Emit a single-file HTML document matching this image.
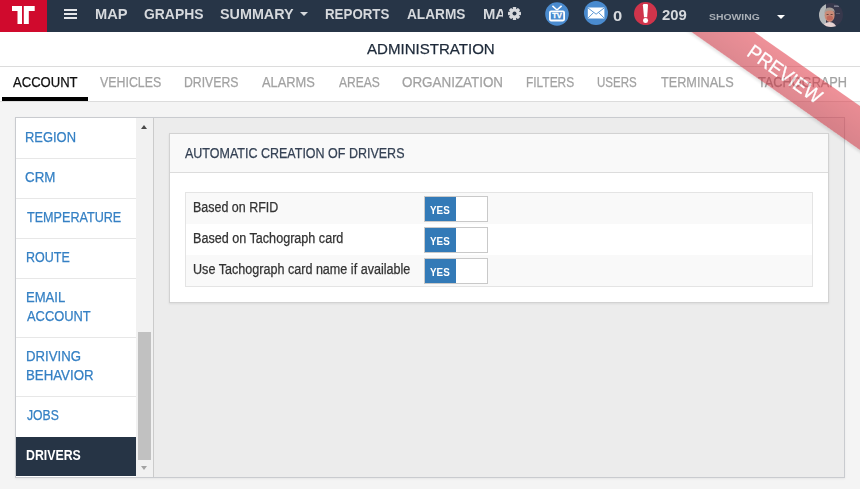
<!DOCTYPE html>
<html><head><meta charset="utf-8">
<style>
*{box-sizing:border-box}
html,body{margin:0;padding:0}
body{width:860px;height:489px;overflow:hidden;position:relative;background:#f4f4f4;font-family:"Liberation Sans",sans-serif}
.a{position:absolute}
.t{position:absolute;z-index:3;white-space:nowrap;line-height:20px;transform-origin:0 0;font-family:"Liberation Sans",sans-serif}
.hdr{left:0;top:0;width:860px;height:32px;background:#273547;z-index:5}
.logo{left:0;top:0;width:47px;height:32px;background:#d00a2d}
.bar{left:64px;width:13px;height:2px;background:#e4e6e9}
.tri{width:0;height:0;border-left:4px solid transparent;border-right:4px solid transparent;border-top:4px solid #d6d9dd}
.circ{border-radius:50%}
.row{left:16px;width:120px;height:1px;background:#e7e7e7}
.tog{left:424px;width:64px;height:26px;border:1px solid #c9c9c9;background:#fff}
.tog i{position:absolute;left:0;top:0;width:31px;height:24px;background:#337ab7}
.rib{z-index:4}
</style></head><body>
<!-- title + tabs -->
<div class="a" style="left:0;top:32px;width:860px;height:69px;background:#fff"></div>
<div class="a" style="left:0;top:66px;width:860px;height:1px;background:#dcdcdc"></div>
<div class="a" style="left:0;top:101px;width:860px;height:1px;background:#dcdcdc"></div>
<div class="a" style="left:2px;top:97px;width:86px;height:4px;background:#000"></div>

<!-- container -->
<div class="a" style="left:15px;top:117px;width:830px;height:361px;border:1px solid #c9cbcf;background:#ececec;box-shadow:0 1px 2px rgba(0,0,0,0.06)"></div>
<div class="a" style="left:16px;top:118px;width:120px;height:359px;background:#fff"></div>
<div class="a" style="left:136px;top:118px;width:17px;height:359px;background:#f1f1f1"></div>
<div class="a" style="left:153px;top:118px;width:1px;height:359px;background:#cbcbcb"></div>
<div class="a" style="left:138px;top:332px;width:13px;height:128px;background:#c1c1c1"></div>
<div class="a" style="left:141px;top:124.6px;width:0;height:0;border-left:3.6px solid transparent;border-right:3.6px solid transparent;border-bottom:4.5px solid #4a4a4a"></div>
<div class="a" style="left:141px;top:465.7px;width:0;height:0;border-left:3.6px solid transparent;border-right:3.6px solid transparent;border-top:4.5px solid #a3a3a3"></div>
<div class="a row" style="top:158px"></div>
<div class="a row" style="top:198px"></div>
<div class="a row" style="top:238px"></div>
<div class="a row" style="top:278px"></div>
<div class="a row" style="top:337px"></div>
<div class="a row" style="top:396px"></div>
<div class="a" style="left:16px;top:437px;width:120px;height:39px;background:#263445"></div>

<!-- card -->
<div class="a" style="left:169px;top:133px;width:660px;height:170px;border:1px solid #d2d2d2;background:#fff;box-shadow:0 1px 2px rgba(0,0,0,0.08)"></div>
<div class="a" style="left:170px;top:134px;width:658px;height:38px;background:#f9f9f9"></div>
<div class="a" style="left:170px;top:172px;width:658px;height:1px;background:#dcdcdc"></div>
<div class="a" style="left:185px;top:192px;width:628px;height:95px;border:1px solid #e4e4e4;background:#fff"></div>
<div class="a" style="left:186px;top:193px;width:626px;height:31px;background:#f9f9f9"></div>
<div class="a" style="left:186px;top:255px;width:626px;height:31px;background:#f9f9f9"></div>
<div class="a tog" style="top:196px"><i></i></div>
<div class="a tog" style="top:227px"><i></i></div>
<div class="a tog" style="top:258px"><i></i></div>

<!-- ribbon -->
<div class="a rib" style="left:0;top:0;width:860px;height:489px;opacity:0.56;pointer-events:none">
<div class="a" style="left:600px;top:67.9px;width:400px;height:36.2px;transform:rotate(35deg);transform-origin:50% 50%;background:linear-gradient(rgb(226,60,73),rgb(196,44,58));box-shadow:0 2px 3px rgba(0,0,0,0.2)"></div>
<div class="a" style="left:725px;top:62.4px;width:120px;height:24px;transform:rotate(35deg) scaleX(0.933);transform-origin:50% 50%;text-align:center;color:#fff;font-size:20px;line-height:24px;-webkit-text-stroke:0.3px #fff">PREVIEW</div>
</div>

<!-- header -->
<div class="a hdr">
  <div class="a logo">
    <svg width="47" height="32" style="position:absolute;left:0;top:0">
      <path d="M12 6H22V24H17.5V11H12Z M23.8 6H34.7V11H28.8V24H23.8Z" fill="#fff"/>
    </svg>
  </div>
  <div class="a bar" style="top:9px"></div>
  <div class="a bar" style="top:13px"></div>
  <div class="a bar" style="top:17px"></div>
  <div class="a tri" style="left:300px;top:12px"></div>
  <div class="a" style="left:482px;top:0;width:21px;height:32px;overflow:hidden">
    <div class="t" style="left:0.5px;top:3.8px;font-size:14px;font-weight:700;color:#d6d9dd;transform:scaleX(1.06)">MAINTENANCE</div>
  </div>
  <svg class="a" style="left:507px;top:6.4px" width="15" height="15" viewBox="-7.5 -7.5 15 15">
    <g fill="#d6d9dd">
      <rect x="-1.7" y="-6.5" width="3.4" height="13" rx="0.6"/>
      <rect x="-1.7" y="-6.5" width="3.4" height="13" rx="0.6" transform="rotate(45)"/>
      <rect x="-1.7" y="-6.5" width="3.4" height="13" rx="0.6" transform="rotate(90)"/>
      <rect x="-1.7" y="-6.5" width="3.4" height="13" rx="0.6" transform="rotate(135)"/>
      <circle r="4.8"/>
    </g>
    <circle r="2" fill="#263445"/>
  </svg>
  <!-- TV -->
  <svg class="a" style="left:545px;top:1.5px" width="24" height="24" viewBox="0 0 24 24">
    <circle cx="12" cy="12" r="11.8" fill="#4a8bcf"/>
    <path d="M7.4 3.9L12 8M16.6 3.9L12 8" stroke="#fff" stroke-width="1.6" fill="none"/>
    <rect x="4.9" y="9.4" width="14.2" height="9.1" rx="1.2" fill="none" stroke="#fff" stroke-width="1.8"/>
    <text x="12.1" y="16.4" text-anchor="middle" font-family="Liberation Sans" font-weight="700" font-size="7.6" fill="#fff" stroke="#fff" stroke-width="0.3">TV</text>
  </svg>
  <!-- mail -->
  <svg class="a" style="left:584.2px;top:1.3px" width="24" height="24" viewBox="0 0 24 24">
    <circle cx="12" cy="12" r="12" fill="#4a8bcf"/>
    <rect x="3.8" y="6.5" width="16.6" height="11" fill="#fff"/>
    <path d="M3.8 6.8L12.1 13.2L20.4 6.8M3.8 17.3L9.6 11.5M20.4 17.3L14.6 11.5" stroke="#4a8bcf" stroke-width="0.9" fill="none"/>
  </svg>
  <!-- alert -->
  <svg class="a" style="left:634.3px;top:2px" width="23.2" height="23.2" viewBox="0 0 23.2 23.2">
    <circle cx="11.6" cy="11.6" r="11.6" fill="#d0344b"/>
    <path d="M8.9 3.2Q8.9 2.1 10 2.1H12.9Q14 2.1 14 3.2L13.2 15.2H10Z" fill="#fff"/>
    <circle cx="11.6" cy="18.4" r="2.5" fill="#fff"/>
  </svg>
  <div class="a tri" style="left:777px;top:14.5px;border-top-color:#fff"></div>
  <!-- avatar -->
  <svg class="a" style="left:819px;top:3px" width="24" height="24" viewBox="0 0 24 24">
    <defs><clipPath id="cp"><circle cx="12" cy="12" r="12"/></clipPath>
    <filter id="bl" x="-20%" y="-20%" width="140%" height="140%"><feGaussianBlur stdDeviation="0.7"/></filter></defs>
    <g clip-path="url(#cp)">
      <rect width="24" height="24" fill="#37384c"/>
      <g filter="url(#bl)">
      <rect x="-2" y="-2" width="9" height="28" fill="#b3b8ba"/>
      <rect x="15" y="2.5" width="5" height="1.3" fill="#8a8c9c"/>
      <rect x="17" y="10" width="4" height="1" fill="#5c5d70"/>
      <path d="M3.5 25Q4.5 19.5 10.5 19Q16.5 19.5 17.5 25Z" fill="#e6d2d2"/>
      <ellipse cx="10.6" cy="12.3" rx="5" ry="6.8" fill="#c98b78"/>
      <ellipse cx="10.8" cy="15" rx="3.2" ry="2.5" fill="#c06a5c"/>
      <path d="M5.4 10.5Q5.2 4.6 10.8 4.6Q16 4.8 15.9 10.5L15 8.6Q11 6.4 6.4 8.8Z" fill="#a49c96"/>
      <rect x="7.6" y="11" width="2" height="0.9" fill="#5a3a35"/>
      <rect x="11.6" y="11" width="2" height="0.9" fill="#5a3a35"/>
      </g>
    </g>
  </svg>
</div>
<div class="t" style="left:94.75px;top:3.80px;font-size:14px;font-weight:700;color:#d6d9dd;transform:scaleX(1.0467);z-index:6">MAP</div>
<div class="t" style="left:144.21px;top:3.80px;font-size:14px;font-weight:700;color:#d6d9dd;transform:scaleX(0.9931);z-index:6">GRAPHS</div>
<div class="t" style="left:219.97px;top:3.80px;font-size:14px;font-weight:700;color:#d6d9dd;transform:scaleX(1.0254);z-index:6">SUMMARY</div>
<div class="t" style="left:324.95px;top:3.80px;font-size:14px;font-weight:700;color:#d6d9dd;transform:scaleX(0.9515);z-index:6">REPORTS</div>
<div class="t" style="left:407.00px;top:3.80px;font-size:14px;font-weight:700;color:#d6d9dd;transform:scaleX(0.9763);z-index:6">ALARMS</div>
<div class="t" style="left:612.86px;top:6.00px;font-size:14.5px;font-weight:700;color:#d6d9dd;transform:scaleX(1.1429);z-index:6">0</div>
<div class="t" style="left:662.00px;top:5.30px;font-size:14.5px;font-weight:700;color:#d6d9dd;transform:scaleX(1.0250);z-index:6">209</div>
<div class="t" style="left:708.81px;top:6.60px;font-size:9.5px;font-weight:700;color:#aab0b7;transform:scaleX(1.0933);z-index:6">SHOWING</div>
<div class="t" style="left:367.00px;top:38.80px;font-size:15.5px;font-weight:400;color:#1e2a3a;transform:scaleX(0.9715);-webkit-text-stroke:0.25px #1e2a3a;">ADMINISTRATION</div>
<div class="t" style="left:12.60px;top:71.80px;font-size:14px;font-weight:400;color:#111;transform:scaleX(0.9333);-webkit-text-stroke:0.25px #111;">ACCOUNT</div>
<div class="t" style="left:100.00px;top:71.80px;font-size:14px;font-weight:400;color:#a2a2a2;transform:scaleX(0.8841);-webkit-text-stroke:0.25px #a2a2a2;">VEHICLES</div>
<div class="t" style="left:183.52px;top:71.80px;font-size:14px;font-weight:400;color:#a2a2a2;transform:scaleX(0.8754);-webkit-text-stroke:0.25px #a2a2a2;">DRIVERS</div>
<div class="t" style="left:262.30px;top:71.80px;font-size:14px;font-weight:400;color:#a2a2a2;transform:scaleX(0.9175);-webkit-text-stroke:0.25px #a2a2a2;">ALARMS</div>
<div class="t" style="left:338.70px;top:71.80px;font-size:14px;font-weight:400;color:#a2a2a2;transform:scaleX(0.8574);-webkit-text-stroke:0.25px #a2a2a2;">AREAS</div>
<div class="t" style="left:401.64px;top:71.80px;font-size:14px;font-weight:400;color:#a2a2a2;transform:scaleX(0.9577);-webkit-text-stroke:0.25px #a2a2a2;">ORGANIZATION</div>
<div class="t" style="left:526.45px;top:71.80px;font-size:14px;font-weight:400;color:#a2a2a2;transform:scaleX(0.8527);-webkit-text-stroke:0.25px #a2a2a2;">FILTERS</div>
<div class="t" style="left:597.18px;top:71.80px;font-size:14px;font-weight:400;color:#a2a2a2;transform:scaleX(0.8234);-webkit-text-stroke:0.25px #a2a2a2;">USERS</div>
<div class="t" style="left:660.50px;top:71.80px;font-size:14px;font-weight:400;color:#a2a2a2;transform:scaleX(0.9062);-webkit-text-stroke:0.25px #a2a2a2;">TERMINALS</div>
<div class="t" style="left:757.60px;top:71.80px;font-size:14px;font-weight:400;color:#a2a2a2;transform:scaleX(0.9113);-webkit-text-stroke:0.25px #a2a2a2;">TACHOGRAPH</div>
<div class="t" style="left:25.48px;top:127.30px;font-size:14px;font-weight:400;color:#3580c4;transform:scaleX(0.9226);-webkit-text-stroke:0.25px #3580c4;">REGION</div>
<div class="t" style="left:25.45px;top:167.00px;font-size:14px;font-weight:400;color:#3580c4;transform:scaleX(0.9533);-webkit-text-stroke:0.25px #3580c4;">CRM</div>
<div class="t" style="left:26.70px;top:207.00px;font-size:14px;font-weight:400;color:#3580c4;transform:scaleX(0.9000);-webkit-text-stroke:0.25px #3580c4;">TEMPERATURE</div>
<div class="t" style="left:25.81px;top:246.90px;font-size:14px;font-weight:400;color:#3580c4;transform:scaleX(0.8937);-webkit-text-stroke:0.25px #3580c4;">ROUTE</div>
<div class="t" style="left:25.77px;top:287.40px;font-size:14px;font-weight:400;color:#3580c4;transform:scaleX(0.9341);-webkit-text-stroke:0.25px #3580c4;">EMAIL</div>
<div class="t" style="left:26.70px;top:305.80px;font-size:14px;font-weight:400;color:#3580c4;transform:scaleX(0.9203);-webkit-text-stroke:0.25px #3580c4;">ACCOUNT</div>
<div class="t" style="left:25.76px;top:346.10px;font-size:14px;font-weight:400;color:#3580c4;transform:scaleX(0.9421);-webkit-text-stroke:0.25px #3580c4;">DRIVING</div>
<div class="t" style="left:25.75px;top:365.10px;font-size:14px;font-weight:400;color:#3580c4;transform:scaleX(0.9471);-webkit-text-stroke:0.25px #3580c4;">BEHAVIOR</div>
<div class="t" style="left:26.70px;top:405.00px;font-size:14px;font-weight:400;color:#3580c4;transform:scaleX(0.8694);-webkit-text-stroke:0.25px #3580c4;">JOBS</div>
<div class="t" style="left:26.02px;top:445.10px;font-size:14px;font-weight:700;color:#ffffff;transform:scaleX(0.8803);">DRIVERS</div>
<div class="t" style="left:185.40px;top:143.10px;font-size:14.5px;font-weight:400;color:#354255;transform:scaleX(0.8622);-webkit-text-stroke:0.25px #354255;">AUTOMATIC CREATION OF DRIVERS</div>
<div class="t" style="left:192.51px;top:197.30px;font-size:14px;font-weight:400;color:#333;transform:scaleX(0.8904);-webkit-text-stroke:0.25px #333;">Based on RFID</div>
<div class="t" style="left:192.50px;top:228.40px;font-size:14px;font-weight:400;color:#333;transform:scaleX(0.9000);-webkit-text-stroke:0.25px #333;">Based on Tachograph card</div>
<div class="t" style="left:192.50px;top:259.30px;font-size:14px;font-weight:400;color:#333;transform:scaleX(0.8988);-webkit-text-stroke:0.25px #333;">Use Tachograph card name if available</div>
<div class="t" style="left:430.30px;top:200.20px;font-size:11.5px;font-weight:700;color:#fff;transform:scaleX(0.8565);">YES</div>
<div class="t" style="left:430.30px;top:231.20px;font-size:11.5px;font-weight:700;color:#fff;transform:scaleX(0.8565);">YES</div>
<div class="t" style="left:430.30px;top:262.20px;font-size:11.5px;font-weight:700;color:#fff;transform:scaleX(0.8565);">YES</div>
</body></html>
